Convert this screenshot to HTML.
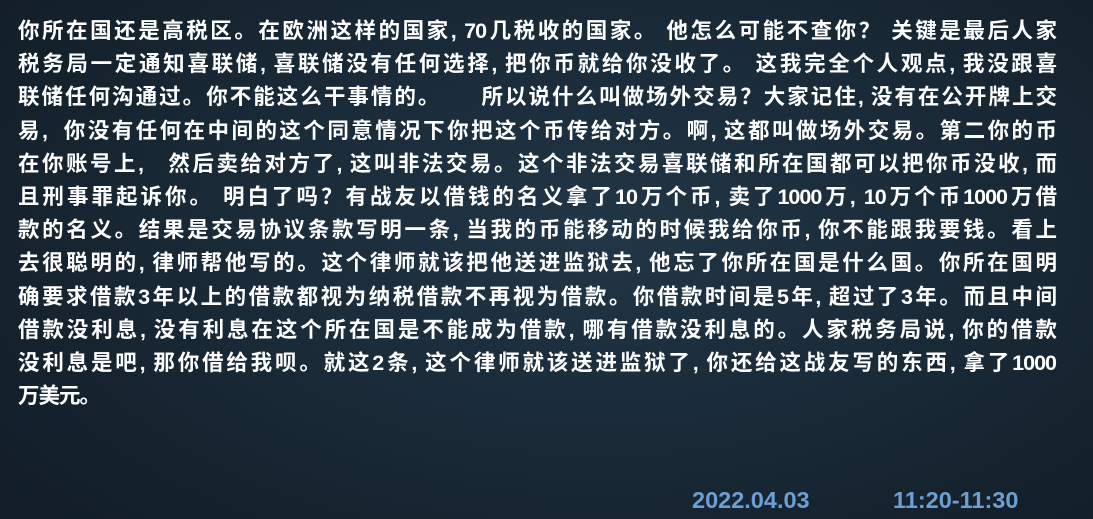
<!DOCTYPE html>
<html><head><meta charset="utf-8"><style>
html,body{margin:0;padding:0}
body{width:1093px;height:519px;overflow:hidden;position:relative;
background:radial-gradient(ellipse 70% 80% at 55% 45%,#213647 0%,#1a2b39 45%,#121d27 100%);
font-family:"Liberation Sans","Noto Sans CJK SC",sans-serif;}
.t{position:absolute;left:18px;top:15px;width:1038px;color:#fff;font-weight:bold;font-size:21.5px;line-height:33.2px;letter-spacing:-1px}
.t div{white-space:nowrap;text-align:justify;text-align-last:justify;height:33.2px}
.t div.l{text-align-last:left}
.d{position:absolute;top:487px;color:#6d9fd1;font-weight:bold;font-size:23.5px;font-family:"Liberation Sans",sans-serif}
</style></head><body>
<div class="t">
<div>你所在国还是高税区。在欧洲这样的国家, 70几税收的国家。 他怎么可能不查你？ 关键是最后人家</div>
<div>税务局一定通知喜联储, 喜联储没有任何选择, 把你币就给你没收了。 这我完全个人观点, 我没跟喜</div>
<div>联储任何沟通过。你不能这么干事情的。&nbsp;&nbsp;&nbsp;&nbsp; 所以说什么叫做场外交易？大家记住, 没有在公开牌上交</div>
<div>易, &nbsp;你没有任何在中间的这个同意情况下你把这个币传给对方。啊, 这都叫做场外交易。第二你的币</div>
<div>在你账号上, &nbsp;&nbsp;然后卖给对方了, 这叫非法交易。这个非法交易喜联储和所在国都可以把你币没收, 而</div>
<div>且刑事罪起诉你。 明白了吗？有战友以借钱的名义拿了10万个币, 卖了1000万, 10万个币1000万借</div>
<div>款的名义。结果是交易协议条款写明一条, 当我的币能移动的时候我给你币, 你不能跟我要钱。看上</div>
<div>去很聪明的, 律师帮他写的。这个律师就该把他送进监狱去, 他忘了你所在国是什么国。你所在国明</div>
<div>确要求借款3年以上的借款都视为纳税借款不再视为借款。你借款时间是5年, 超过了3年。而且中间</div>
<div>借款没利息, 没有利息在这个所在国是不能成为借款, 哪有借款没利息的。人家税务局说, 你的借款</div>
<div>没利息是吧, 那你借给我呗。就这2条, 这个律师就该送进监狱了, 你还给这战友写的东西, 拿了1000</div>
<div class="l">万美元。</div>
</div>
<div class="d" style="left:692px">2022.04.03</div>
<div class="d" style="left:893px">11:20-11:30</div>
</body></html>
